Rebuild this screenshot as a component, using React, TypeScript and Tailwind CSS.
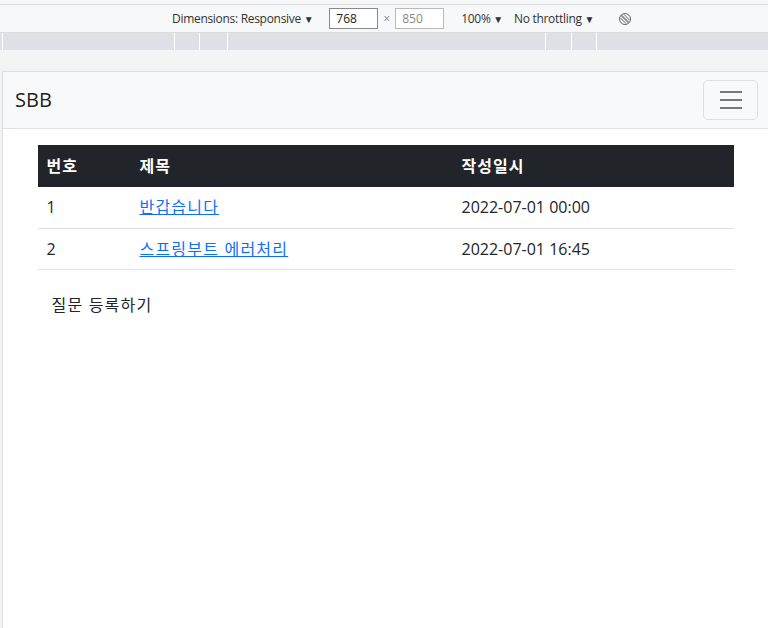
import { useState } from "react";

type Question = { id: number; subject: string; createDate: string };

const questions: Question[] = [
  { id: 1, subject: "반갑습니다", createDate: "2022-07-01 00:00" },
  { id: 2, subject: "스프링부트 에러처리", createDate: "2022-07-01 16:45" },
];

const uiFont = { fontFamily: '"Open Sans", "Noto Sans CJK KR", sans-serif' };

function DevToolbar() {
  return (
    <div className="bg-[#f7f8f9] text-[12px] text-[#333]" style={{ fontFamily: '"Open Sans", "Liberation Sans", sans-serif' }}>
      <div className="h-[4px] bg-[#f7f8f9]" />
      <div className="flex h-[29px] items-center border-y border-[#dcdcdc] bg-[#f7f8f9] pl-[172px]">
        <span className="tracking-[-0.3px]">
          Dimensions: Responsive <span className="text-[10px]">▼</span>
        </span>
        <input
          readOnly
          value="768"
          className="ml-[16px] h-[21px] w-[49px] border border-[#8a8a8a] bg-white px-[6px] text-[12px] text-[#222] outline-none"
        />
        <span className="mx-[5px] text-[#6b8fb8]">×</span>
        <input
          readOnly
          value="850"
          className="h-[21px] w-[49px] border border-[#b9b9b9] bg-white px-[6px] text-[12px] text-[#888] outline-none"
        />
        <span className="ml-[17px] tracking-[-0.3px]">
          100% <span className="text-[10px]">▼</span>
        </span>
        <span className="ml-[11px] tracking-[-0.3px]">
          No throttling <span className="text-[10px]">▼</span>
        </span>
        <svg className="ml-[24px]" width="14" height="14" viewBox="0 0 14 14" fill="none" stroke="#666" strokeWidth="1">
          <circle cx="7" cy="7" r="5.5" />
          <path d="M3.5 3 L11 10.5 M3 3.5 L10.5 11 M2.5 6 L8 11.5 M6 2.5 L11.5 8" />
        </svg>
      </div>
      <div className="flex h-[17px] bg-[#dee1e6]">
        <div className="w-[2px]" />
        <div className="w-[1px] bg-white" />
        <div className="w-[171px]" />
        <div className="w-[1px] bg-white" />
        <div className="w-[24px]" />
        <div className="w-[1px] bg-white" />
        <div className="w-[27px]" />
        <div className="w-[1px] bg-white" />
        <div className="w-[317px]" />
        <div className="w-[1px] bg-white" />
        <div className="w-[25px]" />
        <div className="w-[1px] bg-white" />
        <div className="w-[24px]" />
        <div className="w-[1px] bg-white" />
      </div>
      <div className="h-[21px] bg-gradient-to-b from-[#f5f5f5] to-[#f2f3f3]" />
    </div>
  );
}

function Navbar() {
  const [open, setOpen] = useState(false);
  return (
    <nav className="flex h-[57px] items-center justify-between border-b border-[#dee2e6] bg-[#f8f9fa] pl-[12px] pr-[10px]">
      <a href="#" className="text-[20px] text-black/90" style={uiFont}>
        SBB
      </a>
      <button
        type="button"
        onClick={() => setOpen(!open)}
        className="flex h-[40px] w-[55px] items-center justify-center rounded-[5px] border border-black/10"
        aria-label="Toggle navigation"
      >
        <svg width="30" height="30" viewBox="0 0 30 30">
          <path stroke="rgba(33,37,41,0.6)" strokeWidth="2" d="M4 7h22M4 15h22M4 23h22" />
        </svg>
      </button>
    </nav>
  );
}

export default function App() {
  return (
    <div className="flex h-[628px] flex-col overflow-hidden bg-[#f2f3f3]">
      <DevToolbar />
      <div className="ml-[2px] flex-1 border-l border-t border-[#e0e0e0] bg-white" style={uiFont}>
        <Navbar />
        <div className="mx-auto w-[720px] px-[12px] pt-[16px] text-[16px] text-[#212529]">
          <table className="mb-[16px] w-full border-collapse text-left">
            <thead>
              <tr className="h-[42px] bg-[#212529] text-white">
                <th className="w-[93px] pl-[9px] pr-[7px] font-bold tracking-[1px]">번호</th>
                <th className="w-[322px] pl-[9px] pr-[7px] font-bold tracking-[1px]">제목</th>
                <th className="pl-[9px] pr-[7px] font-bold tracking-[1px]">작성일시</th>
              </tr>
            </thead>
            <tbody>
              {questions.map((q) => (
                <tr key={q.id} className="h-[41px] border-b border-[#dee2e6]">
                  <td className="pl-[9px] pr-[7px]">{q.id}</td>
                  <td className="pl-[9px] pr-[7px]">
                    <a href="#" className="tracking-[1.2px] text-[#0d6efd] underline">
                      {q.subject}
                    </a>
                  </td>
                  <td className="pl-[9px] pr-[7px]">{q.createDate}</td>
                </tr>
              ))}
            </tbody>
          </table>
          <a href="#" className="ml-[1px] inline-block border border-transparent px-[12px] py-[6px] leading-[24px] tracking-[1.2px]">
            질문 등록하기
          </a>
        </div>
      </div>
    </div>
  );
}
